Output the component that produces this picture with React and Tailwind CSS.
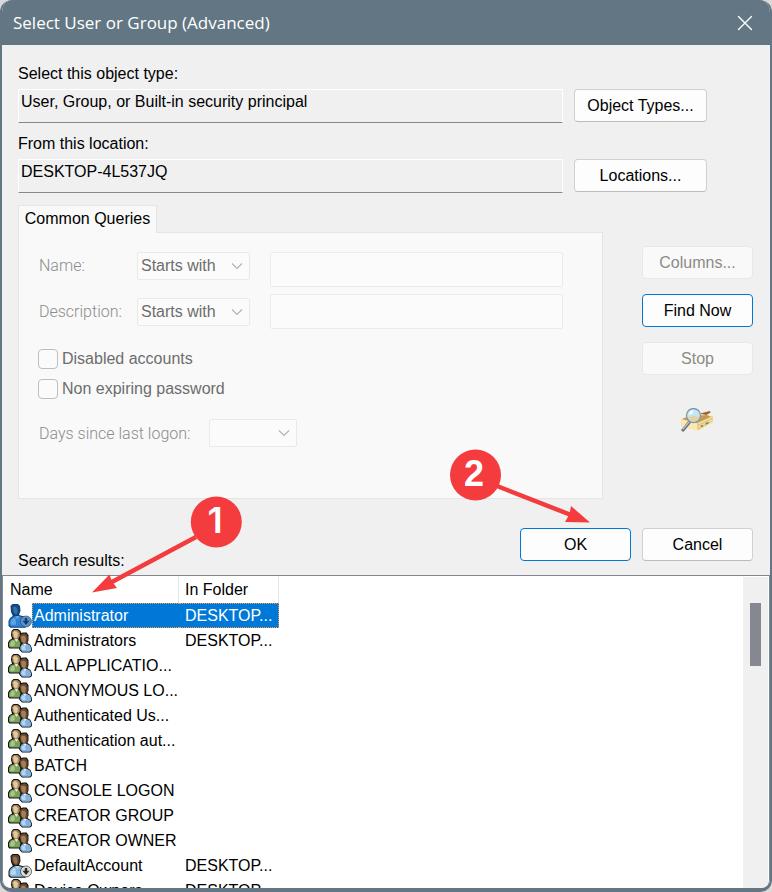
import React from 'react';
import { X } from 'lucide-react';

const results = [
  { name: 'Administrator', folder: 'DESKTOP...', kind: 'user', selected: true },
  { name: 'Administrators', folder: 'DESKTOP...', kind: 'group' },
  { name: 'ALL APPLICATIO...', folder: '', kind: 'group' },
  { name: 'ANONYMOUS LO...', folder: '', kind: 'group' },
  { name: 'Authenticated Us...', folder: '', kind: 'group' },
  { name: 'Authentication aut...', folder: '', kind: 'group' },
  { name: 'BATCH', folder: '', kind: 'group' },
  { name: 'CONSOLE LOGON', folder: '', kind: 'group' },
  { name: 'CREATOR GROUP', folder: '', kind: 'group' },
  { name: 'CREATOR OWNER', folder: '', kind: 'group' },
  { name: 'DefaultAccount', folder: 'DESKTOP...', kind: 'user' },
  { name: 'Device Owners', folder: 'DESKTOP...', kind: 'group' }
];

function GroupIcon() {
  return (
    <svg className="w-6 h-6 shrink-0" viewBox="0 0 24 24" aria-hidden="true">
      <path d="M3.500 2L5.500 0H10l2.500 2 .8 2L15 3.500h3.500L20.500 6v5.500L19.500 14l3 2 1.500 3.500V22l-2 1.500h-8L11.500 21l-.5-1.500H1.500L0 18v-4.500L1.500 11 4 9.800 3 6z" fill="#15130f" />
      <path d="M1 14l1.500-2.500 2.300-1 6 .2L12.500 14l-1 4.500h-9L1 17.500z" fill="#7ba25c" />
      <path d="M2.500 14l2-2.500 1.800.3.700 4-2 1.500-2.500-.3z" fill="#a5c888" />
      <path d="M4 3l2-2h3.500l2.300 2v4L10 10.200H6.500L4.500 7.500z" fill="#a78358" />
      <path d="M5 3.500L6.500 2l2 .5L10 4.500 9.500 8 8 9.500 6 8z" fill="#e3c99f" />
      <path d="M6.500 10h3.800L8.500 13z" fill="#f0e3c4" />
      <path d="M11.800 7L13.500 5l3-.8L19 5.500l.7 2.500v4l-2 3.200-3.200-.4L12.500 12z" fill="#62462f" />
      <path d="M13 8l1.500-1.500L17 7l1 2-.5 4-1.500 1.300-2.500-2z" fill="#a57e57" />
      <path d="M12.300 18l1.200-2.300 2-1 3.500.2 3 1.600 1.200 3v2L21.500 22.700h-7L12.300 20.500z" fill="#82b2df" />
      <path d="M13.500 18l1.500-1.500 2 .5.800 4-2.800.3-1.500-1.500z" fill="#b5d6f1" />
      <path d="M15.500 14.800h3l-1.500 2.700z" fill="#e3edf5" />
    </svg>
  );
}

function UserIcon({ selected }) {
  const c = selected
    ? { line: '#0b3f7c', hair: '#1c4a7e', face: '#356fac', body: '#2f83d2', shine: '#5fa4e4', badge: '#5b93c9', mark: '#123e74' }
    : { line: '#16130f', hair: '#5f452f', face: '#97704c', body: '#86b5e0', shine: '#b7d7f1', badge: '#dddeda', mark: '#29292d' };
  return (
    <svg className="w-6 h-6 shrink-0" viewBox="0 0 24 24" aria-hidden="true">
      <path d="M2.500 2L4.500 0H10l2 2 .5 5-1.500 4 5 1.500 3 3V22l-2 1.700H2.500L.5 22v-5l1.500-3 2.800-2L3 8z" fill={c.line} />
      <path d="M3.500 2.500L5 1h4.500L11 2.500l.5 4.500L10 10.500l-2.500 1L5 9.500 4 7z" fill={c.hair} />
      <path d="M4.800 3.500L7 2.500l2 1.500.5 4.500L8 10.500 6 8.500z" fill={c.face} />
      <path d="M1.500 17l1.500-2.500L6 12.500l5-.5 4.500 1.500L18 16v5l-2 1.700H3L1.500 21z" fill={c.body} />
      <path d="M3 17l2.500-3 2 .5.500 6-4 .5-1.500-1z" fill={c.shine} />
      <path d="M7 12h4.500L9.500 15.500z" fill={c.shine} />
      <circle cx="18" cy="17.500" r="5.500" fill={c.badge} stroke={c.line} strokeWidth="0.600" />
      <path d="M16.800 14h2.400v2.800h2.300L18 21l-3.500-4.200h2.300z" fill={c.mark} />
    </svg>
  );
}

function SearchFolderIcon() {
  return (
    <svg className="w-8 h-6" viewBox="0 0 32 24" aria-hidden="true">
      <path d="M0 11.500L5 9l18-4 6-2 .5 2-3 2.500 5 1v5.500L17 22.500 0 18z" fill="#f3d893" />
      <path d="M1 11l5-2 20-2 4 2-14 6z" fill="#c69a55" />
      <path d="M19 5.500L29 3l.5 1.500L25 7z" fill="#9d6434" />
      <path d="M0 11.500l16 4v7L1 19z" fill="#fbe9b4" />
      <path d="M16 15.500L31.500 8v6.500L17 22.500z" fill="#e8c37b" />
      <path d="M17 16l13.500-6.500M17 19l14-7M17.500 22l14-8" stroke="#f7e8ba" strokeWidth="1" />
      <path d="M20 18.500l2-1M24.500 16l3-1.500" stroke="#6c9459" strokeWidth="1.600" />
      <path d="M8.500 14L2 22" stroke="#68717a" strokeWidth="3.200" strokeLinecap="round" />
      <path d="M8 14L2 21" stroke="#bcc6cc" strokeWidth="1.200" strokeLinecap="round" />
      <circle cx="12.500" cy="7.500" r="7" fill="#c5e4f3" stroke="#8198a8" strokeWidth="1.300" />
      <path d="M7 9.500q6-3 11 0-1.500 4-5.500 4T7 9.500z" fill="#e3d2a0" />
      <path d="M7.500 7q1-4.500 5-5l-1 4z" fill="#f3fcff" />
    </svg>
  );
}

function Field({ id, label, value, action }) {
  return (
    <div>
      <label htmlFor={id} className="block h-6 leading-[26px]">{label}</label>
      <div className="mt-1 flex gap-[11px]">
        <input
          id={id}
          readOnly
          value={value}
          className="h-[34px] min-w-0 flex-1 border border-t-white border-l-white border-r-white border-b-[#858890] bg-[#f0f0f0] pb-2 pl-[2px] outline-none"
        />
        <Button className="w-[133px]">{action}</Button>
      </div>
    </div>
  );
}

function Button({ children, className = 'w-[111px]', primary, disabled }) {
  const look = disabled
    ? 'border-[#e8e8e8] bg-[#f9f9f9] text-[#8b8b85]'
    : primary
      ? 'border-[#0078d4] bg-[#fdfdfd]'
      : 'border-[#d0d0d0] border-b-[#bcbcbc] bg-[#fdfdfd]';
  return (
    <button type="button" disabled={disabled} className={`h-[33px] shrink-0 rounded border ${look} ${className}`}>
      {children}
    </button>
  );
}

function Select({ id, label, options, className }) {
  return (
    <div className={`relative h-7 ${className}`}>
      <select
        id={id}
        aria-label={label}
        disabled
        className="block h-full w-full appearance-none rounded-[2px] border border-[#e9e9e9] bg-[#fbfbfb] pl-[3px] text-[#6d6d6d] opacity-100"
      >
        {options.map((option) => (
          <option key={option}>{option}</option>
        ))}
      </select>
      <svg className="pointer-events-none absolute top-[10px] right-[7px] h-2 w-3" viewBox="0 0 12 8" fill="none" aria-hidden="true">
        <path d="M1 1.500l5 5 5-5" stroke="#b3b3b3" strokeWidth="1.200" />
      </svg>
    </div>
  );
}

function QueryRow({ id, label, className = '' }) {
  return (
    <div className="flex">
      <div className={`flex shrink-0 ${className}`}>
        <label htmlFor={id} className="w-[98px] pt-[2px] font-['Roboto',sans-serif] leading-6 font-light text-[#8c8c8c]">
          {label}
        </label>
        <Select label={`${label} condition`} options={['Starts with']} className="w-[113px]" />
      </div>
      <input id={id} disabled className="ml-5 h-[35px] min-w-0 flex-1 rounded-[2px] border border-[#ebebeb] bg-[#fbfbfb]" />
    </div>
  );
}

function CheckRow({ label }) {
  return (
    <label className="flex h-[30px] items-center gap-1 text-[#6d6d6d]">
      <input type="checkbox" disabled className="h-5 w-5 appearance-none rounded border border-[#bdbdc2] bg-[#fbfbfb]" />
      {label}
    </label>
  );
}

// Numbered markers lie on top of the dialog
function StepOne() {
  return (
    <svg className="pointer-events-none absolute top-[494px] left-[90px] h-[102px] w-[154px]" viewBox="90 494 154 102">
      <path d="M196 537L110 583" stroke="#f43b3d" strokeWidth="4.500" />
      <path d="M92 592.500L109.500 574.500 112 581.500 117 588z" fill="#f43b3d" />
      <circle cx="216.300" cy="522" r="25.500" fill="#f43b3d" />
      <text x="215" y="533" textAnchor="middle" className="fill-white font-['Inter',sans-serif] text-[36px] font-semibold">1</text>
    </svg>
  );
}

function StepTwo() {
  return (
    <svg className="pointer-events-none absolute top-[446px] left-[448px] h-20 w-36" viewBox="448 446 144 80">
      <path d="M497 486L571 515" stroke="#f43b3d" strokeWidth="4.500" />
      <path d="M590 522.500L571 506 569.500 514 565 522z" fill="#f43b3d" />
      <circle cx="475.500" cy="475" r="25.500" fill="#f43b3d" />
      <text x="474" y="486" textAnchor="middle" className="fill-white font-['Liberation_Sans',Arial,sans-serif] text-[36px] font-bold">2</text>
    </svg>
  );
}

export default function App() {
  return (
    <div className="h-screen bg-[#dcdad9] font-['Liberation_Sans',Arial,sans-serif] text-base text-black">
      <div className="relative flex h-full flex-col overflow-hidden rounded-xl border-2 border-t-0 border-b-4 border-[#627783] bg-[#f0f0f0]">
        <header className="flex h-[45px] shrink-0 items-center justify-between bg-[#627783] pr-3 pl-[11px] text-white">
          <h1 className="font-['Open_Sans',sans-serif] text-[17px]">Select User or Group (Advanced)</h1>
          <button type="button" aria-label="Close">
            <X className="h-[26px] w-[26px]" strokeWidth={1.3} />
          </button>
        </header>

        <main className="flex min-h-0 flex-1 flex-col">
          <div className="flex flex-col gap-2 pt-4 pr-[63px] pl-4">
            <Field id="object-type" label="Select this object type:" value="User, Group, or Built-in security principal" action="Object Types..." />
            <Field id="location" label="From this location:" value="DESKTOP-4L537JQ" action="Locations..." />
          </div>

          <div className="mt-3 flex gap-[39px] pr-[17px] pl-4">
            <section className="min-w-0 flex-1">
              <button type="button" className="relative z-10 -mb-px block h-7 w-[139px] border border-b-0 border-[#e5e5e5] bg-[#f9f9f9] pb-[2px]">
                Common Queries
              </button>
              <div className="h-[267px] border border-[#e5e5e5] bg-[#f9f9f9] pt-[19px] pr-[39px] pl-5">
                <div className="flex flex-col gap-[7px]">
                  <QueryRow id="name" label="Name:" />
                  <QueryRow id="description" label="Description:" className="pt-1" />
                </div>
                <div className="mt-[15px] -ml-px">
                  <CheckRow label="Disabled accounts" />
                  <CheckRow label="Non expiring password" />
                </div>
                <div className="mt-[15px] flex items-center">
                  <label htmlFor="days" className="w-[170px] pt-[2px] font-['Roboto',sans-serif] font-light text-[#8c8c8c]">
                    Days since last logon:
                  </label>
                  <Select id="days" label="Days since last logon" options={['']} className="w-[88px]" />
                </div>
              </div>
            </section>

            <div className="flex shrink-0 flex-col items-center gap-[15px] pt-[41px]">
              <Button disabled>Columns...</Button>
              <Button primary>Find Now</Button>
              <Button disabled>Stop</Button>
              <div className="mt-[18px] pr-[2px]">
                <SearchFolderIcon />
              </div>
            </div>
          </div>

          <div className="mt-[29px] flex h-[47px] shrink-0 gap-[11px] pr-[17px] pl-4">
            <h2 id="results-title" className="flex-1 self-end pb-[2px]">Search results:</h2>
            <Button primary>OK</Button>
            <Button>Cancel</Button>
          </div>

          <div className="flex min-h-0 flex-1 overflow-hidden rounded-b-lg border border-b-0 border-[#828790] bg-white">
            <div className="min-w-0 flex-1 overflow-hidden">
              <table aria-labelledby="results-title" className="w-[276px] table-fixed border-separate border-spacing-0 text-left">
                <colgroup>
                  <col className="w-[176px]" />
                  <col className="w-[100px]" />
                </colgroup>
                <thead>
                  <tr className="h-[27px]">
                    <th className="border-r border-[#e5e5e5] p-0 pt-px pl-[7px] font-normal">Name</th>
                    <th className="border-r border-[#e5e5e5] p-0 pt-px pl-[6px] font-normal">In Folder</th>
                  </tr>
                </thead>
                <tbody>
                  {results.map((row) => (
                    <tr key={row.name} className="h-[25px] whitespace-nowrap">
                      <td className="p-0">
                        <div className="flex h-[25px] items-center pl-[5px]">
                          {row.kind === 'user' ? <UserIcon selected={row.selected} /> : <GroupIcon />}
                          <span
                            className={`h-[25px] flex-1 border border-r-0 border-dotted pl-px leading-6 ${
                              row.selected ? 'border-[#ff9a3c] bg-[#0078d7] text-white' : 'border-transparent'
                            }`}
                          >
                            {row.name}
                          </span>
                        </div>
                      </td>
                      <td className="p-0">
                        <div
                          className={`h-[25px] border border-l-0 border-dotted pl-[6px] leading-6 ${
                            row.selected ? 'border-[#ff9a3c] bg-[#0078d7] text-white' : 'border-transparent'
                          }`}
                        >
                          {row.folder}
                        </div>
                      </td>
                    </tr>
                  ))}
                </tbody>
              </table>
            </div>
            <div className="mt-px mr-px w-[25px] shrink-0 bg-[#f0f0f0] pt-[26px]">
              <div className="ml-[7px] h-[63px] w-[11px] bg-[#858890]" />
            </div>
          </div>
        </main>

        {/* -left-[2px] makes up for the window frame */}
        <div className="pointer-events-none absolute top-0 -left-[2px]">
          <StepOne />
          <StepTwo />
        </div>
      </div>
    </div>
  );
}
